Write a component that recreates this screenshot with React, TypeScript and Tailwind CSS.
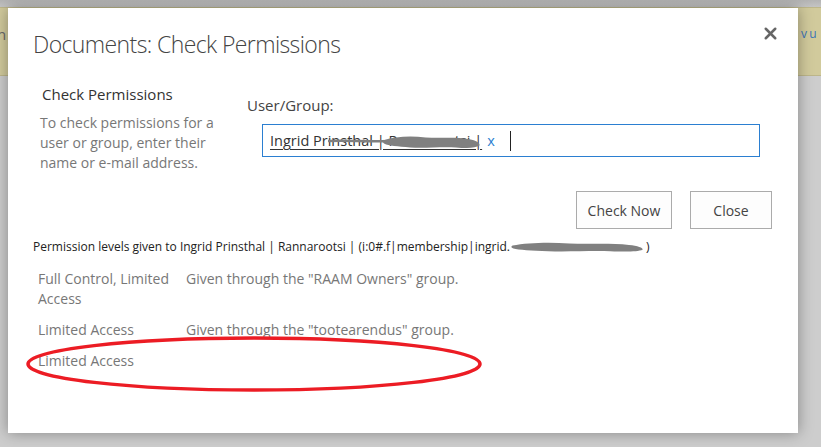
import { X } from 'lucide-react';

const font = { fontFamily: '"Open Sans", "Noto Sans", sans-serif' };

const Scribble = ({ className }: { className?: string }) => (
    <svg className={className} viewBox="0 0 160 20" preserveAspectRatio="none">
        <path d="M3 8 C20 4 45 3 70 5 C95 6 120 4 140 7 C150 8 157 11 156 14 C150 17 135 17 118 16 C95 15 70 17 45 16 C25 15 10 14 4 12 C1 11 1 9 3 8 Z" fill="#808080" />
    </svg>
);

export default function App() {
    return (
        <div className="relative w-[821px] h-[447px] overflow-hidden bg-[#cdcdcd]" style={font}>
            <div className="h-[7px] bg-gradient-to-b from-[#b4b4b4] to-[#c4c4c4]" />
            <div className="flex h-[69px] items-center justify-between border-y border-[#bdb68a] bg-[#d1ca9c] text-[12px] text-[#3b74b8]">
                <span className="-ml-[3px] pb-[14px] text-[15px] text-[#666]">n</span>
                <span className="pb-[16px] pr-[5px] tracking-[-0.5px]">v u</span>
            </div>

            <div className="absolute left-[8px] top-[8px] flex h-[425px] w-[790px] flex-col bg-white shadow-[0_0_14px_rgba(0,0,0,0.35)]">
                <div className="flex items-start justify-between pl-[25px] pr-[18px] pt-[20px]">
                    <h1 className="text-[23px] font-light leading-[32px] tracking-[-0.6px] text-[#444]">Documents: Check Permissions</h1>
                    <button className="-mt-[4px] text-[#666]">
                        <X className="h-[19px] w-[19px]" strokeWidth={3.2} />
                    </button>
                </div>

                <div className="mt-[24px] flex pl-[32px]">
                    <div className="w-[201px]">
                        <div className="pl-[2px] text-[15px] leading-[20px] text-[#333]">Check Permissions</div>
                        <p className="mt-[9px] text-[14px] leading-[20px] text-[#777]">
                            To check permissions for a
                            <br />
                            user or group, enter their
                            <br />
                            name or e-mail address.
                        </p>
                    </div>
                    <div className="mt-[11px] flex flex-col">
                        <label className="pl-[6px] text-[15px] leading-[20px] text-[#444]">User/Group:</label>
                        <div className="ml-[21px] mt-[9px] flex h-[33px] w-[498px] items-center border border-[#2b7fd1] px-[7px] text-[14.5px]">
                            <span className="relative text-[#333] underline decoration-[#333] underline-offset-[3px]">
                                Ingrid Prinsthal | Rannarootsi |
                                <svg className="absolute left-[58px] top-[9px] h-[4px] w-[60px]" viewBox="0 0 60 4" preserveAspectRatio="none">
                                    <path d="M0 2 C20 1 40 3 60 2" stroke="#808080" strokeWidth="2.5" fill="none" />
                                </svg>
                                <Scribble className="absolute left-[112px] top-[3px] h-[18px] w-[100px]" />
                            </span>
                            <span className="ml-[5px] text-[#2b7fd1]">x</span>
                            <span className="ml-[15px] h-[20px] w-px bg-[#222]" />
                        </div>
                    </div>
                </div>

                <div className="mt-[18px] flex justify-end gap-[18px] pr-[26px]">
                    <button className="h-[38px] w-[96px] border border-[#ababab] bg-[#fdfdfd] text-[14px] text-[#444]">Check Now</button>
                    <button className="h-[38px] w-[82px] border border-[#ababab] bg-[#fdfdfd] text-[14px] text-[#444]">Close</button>
                </div>

                <div className="mt-[10px] flex items-center pl-[25px] text-[12px] leading-[16px] text-[#222]">
                    <span>Permission levels given to Ingrid Prinsthal | Rannarootsi | (i:0#.f|membership|ingrid.</span>
                    <Scribble className="h-[14px] w-[136px]" />
                    <span>)</span>
                </div>

                <div className="mt-[14px] grid grid-cols-[148px_1fr] gap-y-[11px] pl-[30px] text-[14px] leading-[20px] text-[#777]">
                    <div>Full Control, Limited<br />Access</div>
                    <div>Given through the "RAAM Owners" group.</div>
                    <div>Limited Access</div>
                    <div>Given through the "tootearendus" group.</div>
                    <div>Limited Access</div>
                    <div />
                </div>

                <svg className="pointer-events-none absolute left-[17px] top-[326px]" width="462" height="62" viewBox="0 0 462 62">
                    <ellipse cx="229" cy="30" rx="226" ry="26" fill="none" stroke="#ec1c24" strokeWidth="3.5" />
                </svg>
            </div>
        </div>
    );
}
